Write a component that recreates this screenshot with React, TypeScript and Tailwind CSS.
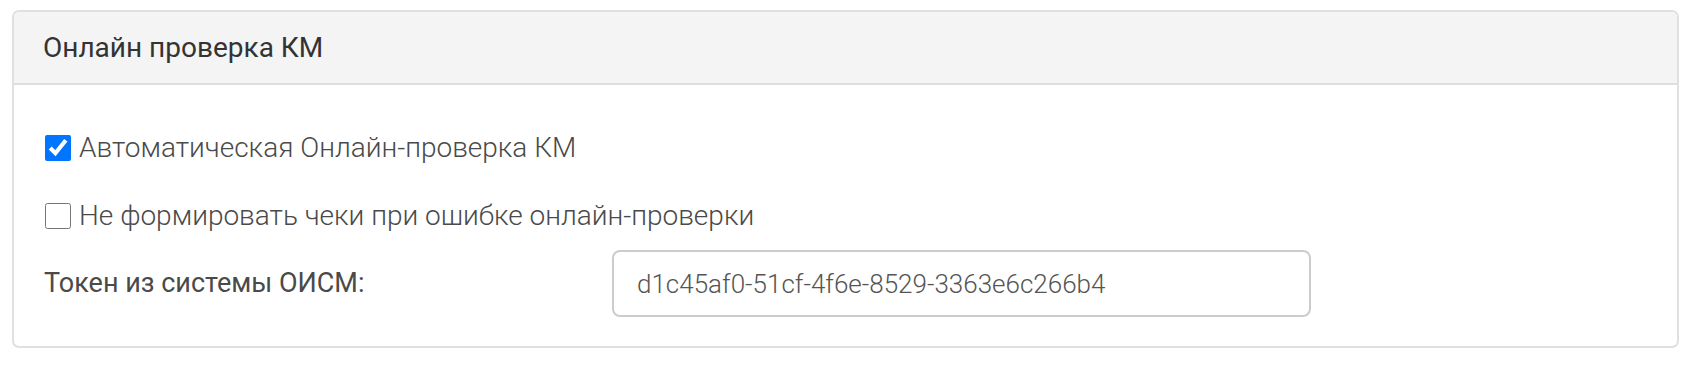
import { useState } from "react"

export default function App() {
    const [autoCheck, setAutoCheck] = useState(true)
    const [noReceipts, setNoReceipts] = useState(false)
    const [token, setToken] = useState('d1c45af0-51cf-4f6e-8529-3363e6c266b4')

    return (
        <div
            className="w-[1690px] h-[372px] bg-white pt-[10px] pl-[12px] pr-[11px]"
            style={{ fontFamily: 'Roboto, "Noto Sans", sans-serif' }}
        >
            <div className="border-2 border-[#e0e0e0] rounded-[7px] overflow-hidden">
                {/* Header */}
                <div className="h-[73px] bg-[#f4f4f4] border-b-2 border-[#dedede] px-[29px] flex items-center">
                    <span className="text-[28px] text-[#333333]">Онлайн проверка КМ</span>
                </div>

                {/* Body */}
                <div className="px-[30px] pt-[45px] pb-[29px]">
                    <label className="h-[36px] flex items-center gap-[8px] cursor-pointer">
                        <input
                            type="checkbox"
                            checked={autoCheck}
                            onChange={(e) => setAutoCheck(e.target.checked)}
                            className="w-[26px] h-[26px] m-0 ml-[1px]"
                        />
                        <span className="text-[28px] font-light text-[#4a4a4a]">Автоматическая Онлайн-проверка КМ</span>
                    </label>

                    <label className="mt-[32px] h-[36px] flex items-center gap-[8px] cursor-pointer">
                        <input
                            type="checkbox"
                            checked={noReceipts}
                            onChange={(e) => setNoReceipts(e.target.checked)}
                            className="w-[26px] h-[26px] m-0 ml-[1px]"
                        />
                        <span className="text-[28px] font-light text-[#4a4a4a]">Не формировать чеки при ошибке онлайн-проверки</span>
                    </label>

                    <div className="mt-[16px] flex items-center">
                        <div className="w-[568px] text-[27px] text-[#4a4a4a]">Токен из системы ОИСМ:</div>
                        <input
                            type="text"
                            value={token}
                            onChange={(e) => setToken(e.target.value)}
                            className="w-[699px] h-[67px] border-2 border-[#cccccc] rounded-[8px] px-[23px] text-[26px] font-light text-[#555555] outline-none"
                        />
                    </div>
                </div>
            </div>
        </div>
    )
}
